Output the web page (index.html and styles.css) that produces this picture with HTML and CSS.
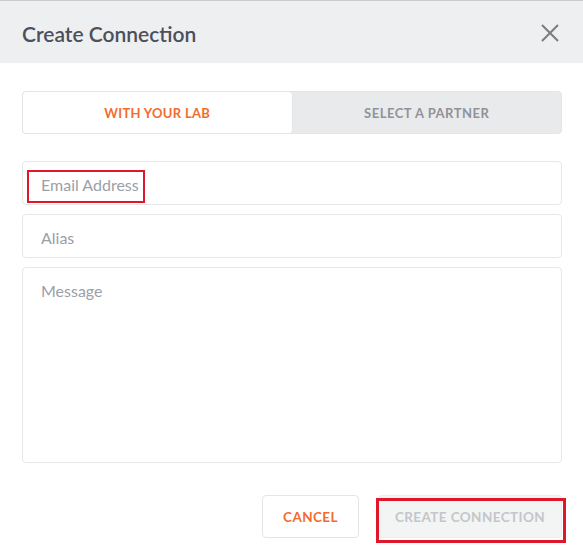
FILE: index.html
```html
<!DOCTYPE html>
<html>
<head>
<meta charset="utf-8">
<link rel="stylesheet" href="styles.css">
</head>
<body>
<div class="modal">
  <div class="header">
    <h1 class="title">Create Connection</h1>
    <button class="close" aria-label="Close">
      <svg width="20" height="20" viewBox="0 0 20 20"><path d="M2 2 L18 18 M18 2 L2 18" stroke="#7a7c80" stroke-width="2" fill="none"/></svg>
    </button>
  </div>
  <div class="body">
    <div class="tabs">
      <div class="tab active">WITH YOUR LAB</div>
      <div class="tab">SELECT A PARTNER</div>
    </div>
    <div class="fields">
      <div class="field">
        <input class="input" type="text" placeholder="Email Address">
        <span class="mark mark-email"></span>
      </div>
      <div class="field">
        <input class="input" type="text" placeholder="Alias">
      </div>
      <div class="field">
        <textarea class="input textarea" placeholder="Message"></textarea>
      </div>
    </div>
    <div class="actions">
      <button class="btn cancel">CANCEL</button>
      <div class="field">
        <button class="btn create" disabled>CREATE CONNECTION</button>
        <span class="mark mark-create"></span>
      </div>
    </div>
  </div>
</div>
</body>
</html>
```
FILE: styles.css
```css
* { box-sizing: border-box; }
html, body { margin: 0; padding: 0; background: #fff; }
body { font-family: "Lato", "Liberation Sans", sans-serif; width: 583px; height: 557px; overflow: hidden; }

.header {
  height: 63px;
  background: #eeeff1;
  border-top: 1px solid #c9cacc;
  display: flex;
  align-items: center;
  justify-content: space-between;
  padding: 0 23px 0 22px;
}
.title {
  margin: 0;
  font-size: 21px;
  font-weight: 600;
  color: #4b505a;
  letter-spacing: 0;
  padding-top: 2px;
}
.close {
  border: 0;
  background: none;
  padding: 0;
  width: 20px;
  height: 20px;
  display: flex;
  margin-top: 2px;
}

.body { padding: 28px 21px 0 22px; }

.tabs {
  display: flex;
  height: 43px;
  background: #e9eaec;
  border: 1px solid #e4e5e7;
  border-radius: 4px;
}
.tab {
  flex: 1;
  display: flex;
  align-items: center;
  justify-content: center;
  font-size: 13px;
  font-weight: 700;
  color: #8f9398;
  letter-spacing: 0.3px;
}
.tab.active {
  background: #fff;
  color: #f46b2d;
  border-radius: 4px;
  border: 1px solid #e4e5e7;
  margin: -1px 0 -1px -1px;
}
.tab:last-child { letter-spacing: 0.5px; }

.fields {
  margin-top: 27px;
  display: flex;
  flex-direction: column;
  gap: 9px;
}
.field { position: relative; }
.input {
  display: block;
  width: 100%;
  height: 44px;
  border: 1px solid #e6e7e9;
  border-radius: 4px;
  padding: 3px 18px 0;
  font-family: inherit;
  font-size: 16px;
  color: #4b505a;
  background: #fff;
  outline: none;
}
.input::placeholder { color: #9ba0a7; }
.textarea {
  height: 196px;
  padding-top: 13px;
  resize: none;
}

.mark {
  position: absolute;
  border: 2px solid #e0162b;
  pointer-events: none;
}
.mark-email { left: 5px; top: 9px; width: 118px; height: 33px; }
.mark-create { left: -2px; top: 3px; width: 190px; height: 45px; border-width: 3px; }

.actions {
  margin-top: 32px;
  display: flex;
  justify-content: flex-end;
  gap: 19px;
}
.btn {
  height: 43px;
  border-radius: 4px;
  font-family: inherit;
  font-size: 13.5px;
  font-weight: 700;
  letter-spacing: 0.4px;
  padding: 0;
}
.cancel {
  width: 97px;
  background: #fff;
  border: 1px solid #e4e5e7;
  color: #f46b2d;
}
.create {
  width: 184px;
  background: #f3f4f4;
  border: 1px solid #ecedee;
  color: #c3c6ca;
  display: block;
}
```
